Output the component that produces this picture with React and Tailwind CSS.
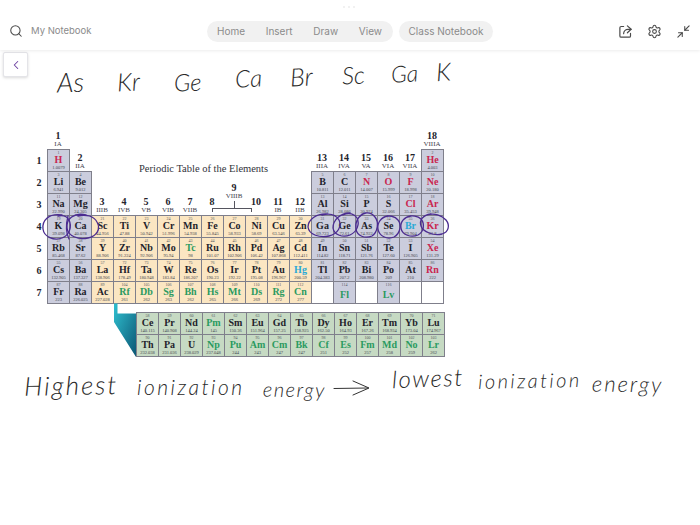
import React from 'react';
import { Search, ChevronLeft, Settings, Minimize2 } from 'lucide-react';

const RED = 'text-[#c9264f]';
const GREEN = 'text-[#2b9a5f]';
const CYAN = 'text-[#2aa9d6]';
const DARK = 'text-[#23232b]';

const MAIN = 'bg-[#cbcddd]';
const TRANS = 'bg-[#fbe6c2]';
const LANTH = 'bg-[#c6dac3]';

const redSet = ['H', 'He', 'N', 'O', 'F', 'Ne', 'Cl', 'Ar', 'Kr', 'Xe', 'Rn'];
const cyanSet = ['Br', 'Hg'];
const greenSet = ['Tc', 'Rf', 'Db', 'Sg', 'Bh', 'Hs', 'Mt', 'Ds', 'Rg', 'Cn', 'Fl', 'Lv', 'Pm', 'Np', 'Pu', 'Am', 'Cm', 'Bk', 'Cf', 'Es', 'Fm', 'Md', 'No', 'Lr'];

// [symbol, number, mass, group, period]
const elements = [
  ['H', 1, '1.0079', 1, 1], ['He', 2, '4.003', 18, 1],
  ['Li', 3, '6.941', 1, 2], ['Be', 4, '9.012', 2, 2], ['B', 5, '10.811', 13, 2], ['C', 6, '12.011', 14, 2], ['N', 7, '14.007', 15, 2], ['O', 8, '15.999', 16, 2], ['F', 9, '18.998', 17, 2], ['Ne', 10, '20.180', 18, 2],
  ['Na', 11, '22.990', 1, 3], ['Mg', 12, '24.305', 2, 3], ['Al', 13, '26.982', 13, 3], ['Si', 14, '28.086', 14, 3], ['P', 15, '30.974', 15, 3], ['S', 16, '32.066', 16, 3], ['Cl', 17, '35.453', 17, 3], ['Ar', 18, '39.948', 18, 3],
  ...['K 39.098', 'Ca 40.078', 'Sc 44.956', 'Ti 47.88', 'V 50.942', 'Cr 51.996', 'Mn 54.938', 'Fe 55.845', 'Co 58.933', 'Ni 58.69', 'Cu 63.546', 'Zn 65.39', 'Ga 69.723', 'Ge 72.61', 'As 74.922', 'Se 78.96', 'Br 79.904', 'Kr 83.8'].map((s, i) => [s.split(' ')[0], 19 + i, s.split(' ')[1], i + 1, 4]),
  ...['Rb 85.468', 'Sr 87.62', 'Y 88.906', 'Zr 91.224', 'Nb 92.906', 'Mo 95.94', 'Tc 98', 'Ru 101.07', 'Rh 102.906', 'Pd 106.42', 'Ag 107.868', 'Cd 112.411', 'In 114.82', 'Sn 118.71', 'Sb 121.76', 'Te 127.60', 'I 126.905', 'Xe 131.29'].map((s, i) => [s.split(' ')[0], 37 + i, s.split(' ')[1], i + 1, 5]),
  ...['Cs 55 132.905', 'Ba 56 137.327', 'La 57 138.906', 'Hf 72 178.49', 'Ta 73 180.948', 'W 74 183.84', 'Re 75 186.207', 'Os 76 190.23', 'Ir 77 192.22', 'Pt 78 195.08', 'Au 79 196.967', 'Hg 80 200.59', 'Tl 81 204.383', 'Pb 82 207.2', 'Bi 83 208.980', 'Po 84 209', 'At 85 210', 'Rn 86 222'].map((s, i) => [...s.split(' '), i + 1, 6]),
  ...['Fr 87 223', 'Ra 88 226.025', 'Ac 89 227.028', 'Rf 104 261', 'Db 105 262', 'Sg 106 263', 'Bh 107 262', 'Hs 108 265', 'Mt 109 266', 'Ds 110 269', 'Rg 111 272', 'Cn 112 277'].map((s, i) => [...s.split(' '), i + 1, 7]),
  ['Fl', 114, '', 14, 7], ['Lv', 116, '', 16, 7],
];

const blanks = [13, 15, 17, 18];

const groups = [
  ['1', 'IA', 1, 1], ['2', 'IIA', 2, 2], ['3', 'IIIB', 3, 4], ['4', 'IVB', 4, 4], ['5', 'VB', 5, 4], ['6', 'VIB', 6, 4], ['7', 'VIIB', 7, 4],
  ['8', '', 8, 4], ['10', '', 10, 4], ['11', 'IB', 11, 4], ['12', 'IIB', 12, 4],
  ['13', 'IIIA', 13, 2], ['14', 'IVA', 14, 2], ['15', 'VA', 15, 2], ['16', 'VIA', 16, 2], ['17', 'VIIA', 17, 2], ['18', 'VIIIA', 18, 1],
];

const lanthanides = ['Ce 58 140.115', 'Pr 59 140.908', 'Nd 60 144.24', 'Pm 61 145', 'Sm 62 150.36', 'Eu 63 151.964', 'Gd 64 157.25', 'Tb 65 158.925', 'Dy 66 162.50', 'Ho 67 164.93', 'Er 68 167.26', 'Tm 69 168.934', 'Yb 70 173.04', 'Lu 71 174.967'];
const actinides = ['Th 90 232.038', 'Pa 91 231.036', 'U 92 238.029', 'Np 93 237.048', 'Pu 94 244', 'Am 95 243', 'Cm 96 247', 'Bk 97 247', 'Cf 98 251', 'Es 99 252', 'Fm 100 257', 'Md 101 258', 'No 102 259', 'Lr 103 262'];

const ink = [
  { t: 'As', c: 'left-[57px] top-[18px] text-[27px] -rotate-2' },
  { t: 'Kr', c: 'left-[117px] top-[19px] text-[25px] -rotate-3' },
  { t: 'Ge', c: 'left-[174px] top-[20px] text-[24px] -rotate-2' },
  { t: 'Ca', c: 'left-[235px] top-[16px] text-[24px] -rotate-3' },
  { t: 'Br', c: 'left-[290px] top-[14px] text-[25px] -rotate-3' },
  { t: 'Sc', c: 'left-[342px] top-[13px] text-[24px] -rotate-3' },
  { t: 'Ga', c: 'left-[391px] top-[12px] text-[23px] -rotate-3' },
  { t: 'K', c: 'left-[436px] top-[9px] text-[25px] -rotate-3' },
  { t: 'Highest', c: 'left-[24px] top-[322px] text-[26px] tracking-[2px] -rotate-1' },
  { t: 'ionization', c: 'left-[137px] top-[326px] text-[21px] tracking-[2.5px]' },
  { t: 'energy', c: 'left-[263px] top-[329px] text-[20px] tracking-[1.5px] rotate-1' },
  { t: 'lowest', c: 'left-[392px] top-[316px] text-[24px] tracking-[1.5px] -rotate-2' },
  { t: 'ionization', c: 'left-[478px] top-[320px] text-[20px] tracking-[2.5px] -rotate-1' },
  { t: 'energy', c: 'left-[592px] top-[323px] text-[22px] tracking-[2px] rotate-1' },
];

const colorOf = (sym) => {
  if (redSet.includes(sym)) return RED;
  if (cyanSet.includes(sym)) return CYAN;
  if (greenSet.includes(sym)) return GREEN;
  return DARK;
};

const Cell = ({ sym, num, mass, bg, style }) => (
  <div style={style} className={`${bg} w-[23px] h-[23px] border border-[#7f7f8b] flex flex-col items-center justify-between pt-[1px] pb-[1px] leading-none overflow-hidden`}>
    <span className="text-[4px] leading-none text-[#55555f]">{num}</span>
    <span className={`text-[10px] leading-none font-bold ${colorOf(sym)}`}>{sym}</span>
    <span className="text-[4.5px] leading-none text-[#44444e] whitespace-nowrap">{mass}</span>
  </div>
);

const PillLabel = ({ children }) => (
  <span className="text-[10px] text-[#8b8b8b]">{children}</span>
);

const ShareIcon = () => (
  <svg width="15" height="15" viewBox="0 0 24 24" fill="none" stroke="#4a4a4a" strokeWidth="1.9" strokeLinecap="round" strokeLinejoin="round">
    <path d="M9 4H5a2 2 0 0 0-2 2v13a2 2 0 0 0 2 2h13a2 2 0 0 0 2-2v-4" />
    <path d="M15 3l6 5.5-6 5.5" />
    <path d="M21 8.5h-5a7 7 0 0 0-7 7" />
  </svg>
);

export default function App() {
  return (
    <div className="relative w-[700px] h-[525px] bg-white overflow-hidden flex flex-col font-['Inter',sans-serif]">
      {/* Top bar */}
      <header className="relative h-[50px] shrink-0 flex items-center justify-between pt-[12px] pl-[9px] pr-[9px] bg-white shadow-[0_1px_3px_rgba(0,0,0,0.08)] z-10">
        <div className="absolute left-[343px] top-[6px] flex gap-[3px]">
          <span className="w-[2px] h-[2px] rounded-full bg-[#ececec]" />
          <span className="w-[2px] h-[2px] rounded-full bg-[#ececec]" />
          <span className="w-[2px] h-[2px] rounded-full bg-[#ececec]" />
        </div>
        <div className="flex items-center gap-[8px] w-[198px]">
          <Search size={14} color="#4a4a4a" strokeWidth={1.8} />
          <span className="text-[9.5px] text-[#8b8b8b]">My Notebook</span>
        </div>
        <nav className="flex items-center gap-[6px]">
          <div className="h-[21px] w-[186px] rounded-full bg-[#f1f1f1] flex items-center justify-between pl-[10px] pr-[11px]">
            <PillLabel>Home</PillLabel>
            <PillLabel>Insert</PillLabel>
            <PillLabel>Draw</PillLabel>
            <PillLabel>View</PillLabel>
          </div>
          <div className="h-[21px] w-[94px] rounded-full bg-[#f1f1f1] flex items-center justify-center">
            <PillLabel>Class Notebook</PillLabel>
          </div>
        </nav>
        <div className="flex items-center gap-[14px] w-[198px] justify-end">
          <ShareIcon />
          <Settings size={15} color="#4a4a4a" strokeWidth={1.7} />
          <Minimize2 size={15} color="#4a4a4a" strokeWidth={1.7} />
        </div>
      </header>

      {/* Notebook canvas */}
      <main className="relative flex-1 pt-[77px] pl-[30px] font-['Liberation_Serif',serif]">
        <button className="absolute left-[3px] top-[2px] w-[25px] h-[25px] bg-white rounded-[2px] border border-[#e4e4e8] shadow-[0_1px_3px_rgba(0,0,0,0.15)] flex items-center justify-center">
          <ChevronLeft size={14} color="#6b3fa0" strokeWidth={1.8} />
        </button>

        {ink.map((w, i) => (
          <span key={i} className={`absolute leading-none italic font-light text-[#2a2a2a] font-['Lato',sans-serif] ${w.c}`}>{w.t}</span>
        ))}

        <div className="relative grid grid-cols-[17px_repeat(18,22px)] auto-rows-[22px] w-fit">
          {[1, 2, 3, 4, 5, 6, 7].map((p) => (
            <div key={p} style={{ gridColumn: 1, gridRow: p + 1 }} className="flex items-center justify-center pl-[1px] text-[10px] font-bold text-[#23232b]">{p}</div>
          ))}

          {groups.map(([n, r, col, row]) => (
            <div key={n} style={{ gridColumn: col + 1, gridRow: row }} className="flex flex-col items-center justify-center pt-[2px] leading-none text-[#23232b]">
              <span className="text-[10px] font-bold leading-[10px]">{n}</span>
              <span className="text-[7px] leading-[7px] h-[7px] text-[#44444e]">{r}</span>
            </div>
          ))}

          <div style={{ gridColumn: 10, gridRow: 3 }} className="flex flex-col items-center justify-center leading-none text-[#23232b] translate-y-[9px]">
            <span className="text-[10px] font-bold leading-[10px]">9</span>
            <span className="text-[7px] leading-[7px] text-[#44444e]">VIIIB</span>
          </div>

          <div style={{ gridColumn: '6 / span 9', gridRow: '2 / span 2' }} className="flex items-center pl-[4px] pb-[4px] text-[10.5px] text-[#33333b] whitespace-nowrap">
            Periodic Table of the Elements
          </div>

          {elements.map(([sym, num, mass, g, p]) => (
            <Cell key={sym} sym={sym} num={num} mass={mass} bg={g <= 2 || g >= 13 ? MAIN : TRANS} style={{ gridColumn: g + 1, gridRow: p + 1 }} />
          ))}
          {blanks.map((g) => (
            <div key={g} style={{ gridColumn: g + 1, gridRow: 8 }} className="w-[23px] h-[23px] border border-[#7f7f8b] bg-white" />
          ))}

          {/* bracket under group 8-10 */}
          <div className="absolute left-[182px] top-[81px] w-[40px] h-[4px] border-t border-l border-r border-[#55555f]" />
          <div className="absolute left-[204px] top-[74px] w-px h-[7px] bg-[#55555f]" />
        </div>

        <div className="grid grid-cols-[repeat(14,22px)] auto-rows-[22px] w-fit ml-[106px] mt-[9px]">
          {[...lanthanides, ...actinides].map((s) => {
            const [sym, num, mass] = s.split(' ');
            return <Cell key={sym} sym={sym} num={num} mass={mass} bg={LANTH} />;
          })}
        </div>
      </main>

      {/* Teal connector and pen strokes */}
      <svg className="absolute inset-0 pointer-events-none z-20" width="700" height="525" viewBox="0 0 700 525" fill="none">
        <defs>
          <linearGradient id="teal" x1="0" y1="0" x2="1" y2="1">
            <stop offset="0" stopColor="#2fc0d0" />
            <stop offset="1" stopColor="#0c5674" />
          </linearGradient>
        </defs>
        <path d="M114 303.5L117.5 303.5L117.5 313.5L136 313.5L136 357L114 322Z" fill="url(#teal)" />
        <g stroke="#4b2c91" strokeWidth="1.3" strokeLinecap="round">
          <path d="M62 215C48 213 42 221 43 229C44 237 54 241 62 238C70 235 72 226 69 220C67 216 63 215 58 216" />
          <path d="M86 215C74 212 66 219 67 228C68 236 78 240 88 238C97 236 101 229 97 222C94 216 86 214 78 216" />
          <path d="M68 216c-2 8-2 17 1 23" />
          <path d="M328 214C316 213 308 220 308 227C309 235 320 238 329 236C338 234 342 226 339 220C336 215 330 213 322 215" />
          <path d="M350 213C340 213 333 220 333 228C334 235 343 238 350 235C357 232 360 224 357 218C355 214 349 212 343 215" />
          <path d="M366 213C358 215 355 222 356 229C357 236 365 239 372 236C378 232 379 222 375 217C372 213 367 212 362 214" />
          <path d="M388 216C381 217 377 223 378 229C379 236 387 240 394 237C400 234 402 225 398 220C395 216 389 215 384 217" />
          <path d="M411 216C404 217 400 222 401 228C402 235 411 238 418 235C424 232 425 224 421 219C418 216 412 215 407 217" />
          <path d="M431 214C423 215 419 220 421 226C423 232 434 236 442 234C449 232 450 225 446 220C442 215 434 213 427 215" />
        </g>
        <g stroke="#333" strokeWidth="1" strokeLinecap="round" strokeLinejoin="round">
          <path d="M334 388.5L368 388" />
          <path d="M353 381L369 388L353 395" />
        </g>
      </svg>
    </div>
  );
}
